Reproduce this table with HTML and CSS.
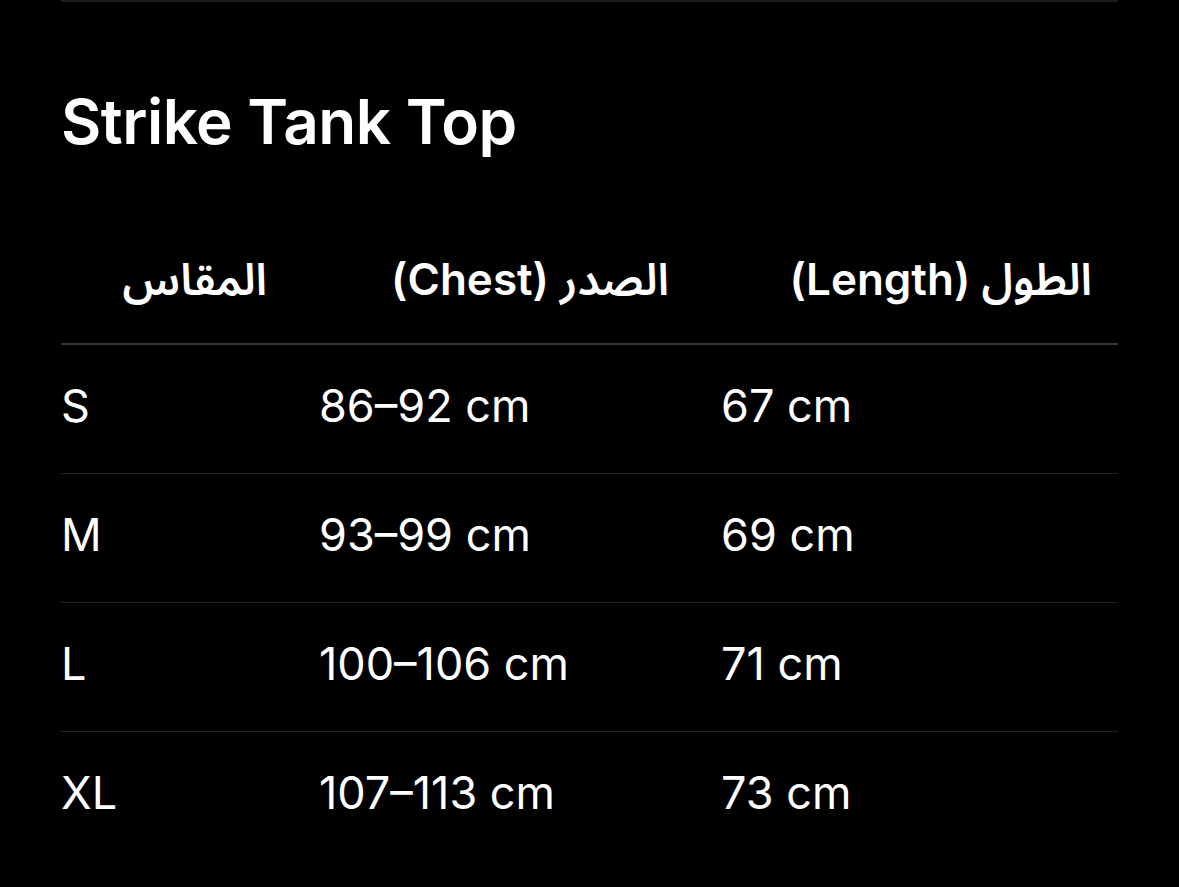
FILE: index.html
```html
<!DOCTYPE html>
<html lang="en">
<head>
<meta charset="utf-8">
<title>Strike Tank Top</title>
<link rel="stylesheet" href="styles.css">
</head>
<body>
<main class="sheet">
  <h1 class="title">Strike Tank Top</h1>
  <table class="sizes">
    <colgroup>
      <col class="c1"><col class="c2"><col class="c3">
    </colgroup>
    <thead>
      <tr>
        <th dir="rtl">المقاس</th>
        <th dir="rtl">الصدر (Chest)</th>
        <th dir="rtl" class="last">الطول (Length)</th>
      </tr>
    </thead>
    <tbody>
      <tr><td>S</td><td>86–92 cm</td><td>67 cm</td></tr>
      <tr><td>M</td><td>93–99 cm</td><td>69 cm</td></tr>
      <tr><td>L</td><td>100–106 cm</td><td>71 cm</td></tr>
      <tr class="end"><td>XL</td><td>107–113 cm</td><td>73 cm</td></tr>
    </tbody>
  </table>
</main>
</body>
</html>
```
FILE: styles.css
```css
html, body {
  margin: 0;
  padding: 0;
  background: #000;
  color: #fff;
  font-family: Inter, "Noto Sans Arabic", "DejaVu Sans", sans-serif;
}
.sheet {
  margin: 0 61px;
  border-top: 2px solid #1c1c1e;
  padding-top: 80px;
}
.title {
  margin: 0;
  font-size: 62px;
  font-weight: 600;
  line-height: 80px;
  letter-spacing: -0.5px;
}
.sizes {
  width: 100%;
  border-collapse: collapse;
  table-layout: fixed;
  margin-top: 80px;
}
.c1 { width: 258px; }
.c2 { width: 402px; }
.c3 { width: 397px; }
.sizes th {
  font-size: 44px;
  font-weight: 600;
  text-align: start;
  padding: 9px 52px 36px 0;
  vertical-align: top;
  line-height: 56px;
  border-bottom: 2px solid #333335;
}
.sizes th.last { padding-right: 26px; }
.sizes td {
  font-size: 45px;
  font-weight: 400;
  line-height: 54px;
  padding: 34px 0 40px 0;
  border-bottom: 1px solid #222224;
  vertical-align: top;
}
.sizes tr.end td { border-bottom: none; }
```
